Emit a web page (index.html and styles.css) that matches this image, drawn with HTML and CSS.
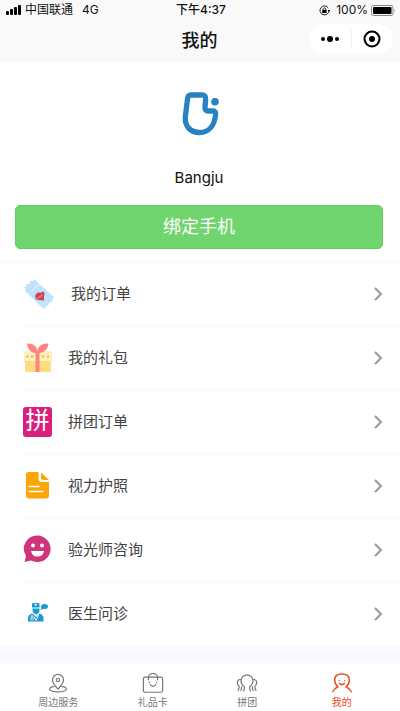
FILE: index.html
```html
<!DOCTYPE html>
<html lang="zh-CN">
<head>
<meta charset="utf-8">
<meta name="viewport" content="width=device-width, initial-scale=1">
<title>我的</title>
<link rel="stylesheet" href="styles.css">
</head>
<body>
<header class="top">
  <div class="status">
    <div class="carrier">
      <svg width="16" height="10" viewBox="0 0 16 10"><rect x="0" y="6" width="3" height="4" rx="1"/><rect x="4" y="4" width="3" height="6" rx="1"/><rect x="8" y="2" width="3" height="8" rx="1"/><rect x="12" y="0" width="3" height="10" rx="1"/></svg>
      <span>中国联通</span><span class="network">4G</span>
    </div>
    <time class="clock">下午4:37</time>
    <div class="power">
      <svg width="11" height="11" viewBox="0 0 11 11"><path d="M9.3 3A4.5 4.5 0 1 0 10 5.5" fill="none" stroke="#222"/><path d="M8.6 5h2.6L9.9 7z"/><rect x="3.2" y="4.8" width="4.4" height="3.2"/><path d="M4.2 5V4a1.2 1.2 0 0 1 2.4 0v1" fill="none" stroke="#222" stroke-width=".8"/></svg>
      <span>100%</span>
      <svg width="25" height="11" viewBox="0 0 25 11"><rect x=".5" y=".5" width="21.5" height="10" rx="2" fill="none" stroke="#888"/><rect x="2" y="2" width="18.5" height="7" rx="1"/><path d="M23 4q1.5 1.5 0 3z" fill="#888"/></svg>
    </div>
  </div>
  <div class="nav">
    <h1 class="title">我的</h1>
    <div class="capsule">
      <button type="button" class="capsule-btn" aria-label="更多"><svg width="20" height="18" viewBox="0 0 20 18"><circle cx="3" cy="9" r="2"/><circle cx="10" cy="9" r="3"/><circle cx="17" cy="9" r="2"/></svg></button>
      <button type="button" class="capsule-btn" aria-label="关闭"><svg width="18" height="18" viewBox="0 0 18 18"><circle cx="9" cy="9" r="7.5" fill="none" stroke="#000" stroke-width="2"/><circle cx="9" cy="9" r="3"/></svg></button>
    </div>
  </div>
</header>

<main class="content">
  <section class="profile">
    <svg class="logo" width="40" height="46" viewBox="0 0 40 46"><path d="M12 4H23Q27 4 26.600 8L26 16.500Q26 20 29.500 20H34Q37 20 36.600 23.500C35.500 35 29.500 41.500 20.500 41.500C11 41.500 5.800 35 6.300 26L8.500 8Q9 4 12 4Z" fill="none" stroke="#2781c2" stroke-width="5.300" stroke-linejoin="round"/><circle cx="36" cy="10.700" r="3.800" fill="#2781c2"/></svg>
    <p class="name">Bangju</p>
    <button type="button" class="bind">绑定手机</button>
  </section>

  <nav class="menu">
    <a class="item" href="#orders">
      <svg class="item-icon wide" viewBox="0 0 32 32"><path d="M1 9L3 8.500 4 6 6.500 5.500 7.500 3 10 3 12 1 14 3.500 15 5 31 19 29.500 21 29 23.500 26.500 24.500 25.500 27 23 28 21 31 19 29.500 2 13 2.500 11Z" fill="#bfe3fb"/><path d="M7.500 14L16 6" stroke="#e9f6ff" stroke-width="1"/><path d="M12.500 20C11.500 16 15 13.500 17.500 15C20.500 12 22.500 15 21 18V22.500L15.500 22Q13 22 12.500 20Z" fill="#cb4458"/><path d="M14.500 20.500L19.500 16.500" stroke="#ef9aa6" stroke-width="1.500" stroke-dasharray="1 .5"/></svg>
      <span class="label">我的订单</span><svg class="chevron" viewBox="0 0 10 16"><path d="M2 2l6 6-6 6"/></svg>
    </a>
    <a class="item" href="#gifts">
      <svg class="item-icon" viewBox="0 0 29 30"><rect x="1" y="8" width="28" height="11" rx="1" fill="#fff0b5"/><path d="M2 18h26v10q0 1-1 1H3q-1 0-1-1z" fill="#fedd80"/><path d="M12.500 29V10C8 10 4.500 6 4 .5C10 0 14 3 14.500 8C15 3 19 0 25.500 .5C25 6 21 10 16.500 10V29Z" fill="#fd8484"/><g fill="#f78383"><circle cx="4.500" cy="13.500" r="1"/><circle cx="9" cy="13.500" r="1"/><circle cx="20" cy="13.500" r="1"/><circle cx="25" cy="13.500" r="1"/></g></svg>
      <span class="label">我的礼包</span><svg class="chevron" viewBox="0 0 10 16"><path d="M2 2l6 6-6 6"/></svg>
    </a>
    <a class="item" href="#group-orders">
      <span class="item-icon group" aria-hidden="true">拼</span>
      <span class="label">拼团订单</span><svg class="chevron" viewBox="0 0 10 16"><path d="M2 2l6 6-6 6"/></svg>
    </a>
    <a class="item" href="#vision">
      <svg class="item-icon" viewBox="0 0 29 30"><path d="M5.500 1H15.500V7.500Q15.500 11 19 11H26V24.500Q26 27.500 23 27.500H6Q3 27.500 3 24.500V3.500Q3 1 5.500 1Z" fill="#fca505"/><path d="M18 1.500L26 9H20Q18 9 18 7Z" fill="#fca505"/><path d="M6 15.500h10M6 20.500h14" stroke="#fff" stroke-width="1.500" stroke-linecap="round"/></svg>
      <span class="label">视力护照</span><svg class="chevron" viewBox="0 0 10 16"><path d="M2 2l6 6-6 6"/></svg>
    </a>
    <a class="item" href="#optometrist">
      <svg class="item-icon" viewBox="0 0 29 30"><path d="M14.500 .5a13.300 13.300 0 1 1-6.500 25L1.500 27 3 21A13.300 13.300 0 0 1 14.500 .5Z" fill="#cf347d"/><circle cx="10" cy="10.500" r="2" fill="#fff"/><circle cx="19" cy="10.500" r="2" fill="#fff"/><path d="M8 16h13Q20 21.500 14.500 21.500T8 16Z" fill="#fff"/></svg>
      <span class="label">验光师咨询</span><svg class="chevron" viewBox="0 0 10 16"><path d="M2 2l6 6-6 6"/></svg>
    </a>
    <a class="item" href="#doctor">
      <svg class="item-icon" viewBox="0 0 29 30"><g fill="#1d98d4"><path d="M9 4.500Q13 3 16.500 4.500V8.500H9Z"/><path d="M9.500 9.500h7V11Q16.500 14.500 13 15.500Q9.500 14.500 9.500 11Z"/><path d="M5 22.500V19Q5 15.500 9.500 14.500L13 18 16.500 14.500Q20.500 15.500 20.500 19V22.500Z"/><ellipse cx="21.500" cy="7.500" rx="3.500" ry="2.500"/><path d="M19 7.500l-1.500 3.500 4-1.500z"/></g><path d="M12.700 4.500v2.500M11.500 5.700h2.500" fill="none" stroke="#fff" stroke-width=".8"/><path d="M9 16v2.500M15.500 16l-2.500 5.500-2-4" fill="none" stroke="#fff"/><circle cx="9" cy="19.500" r="1.400" fill="none" stroke="#fff" stroke-width=".8"/></svg>
      <span class="label">医生问诊</span><svg class="chevron" viewBox="0 0 10 16"><path d="M2 2l6 6-6 6"/></svg>
    </a>
  </nav>
</main>

<nav class="tabs">
  <a class="tab" href="#nearby"><svg viewBox="0 0 24 24"><path d="M12 17.500Q6 11 6 7.500a6 6 0 0 1 12 0Q18 11 12 17.500Z"/><circle cx="12" cy="7.500" r="1.800"/><path d="M8 14.500C4 15 2.500 16.500 3 18C5 21.500 19 21.500 21 18C21.500 16.500 20 15 16 14.500"/></svg>周边服务</a>
  <a class="tab" href="#cards"><svg viewBox="0 0 24 24"><rect x="1.500" y="4.500" width="21" height="16.500" rx="2"/><path d="M7 8V5a5 4.500 0 0 1 10 0V8M8.500 12q3.500 5 7 0M8 9.500v1.500M16 9.500v1.500"/></svg>礼品卡</a>
  <a class="tab" href="#group"><svg viewBox="0 0 24 24"><path d="M8 20q1.500-2 1-5Q5.500 12.500 5.500 8.500a6.500 6.500 0 0 1 13 0q0 4-3.500 6.500-.5 3 1 5M5 7Q1 7.500 1.500 11 1.500 13 3.500 14.500 3.500 17 2 19.500M6 14.500q.5 2.500-1 5M19 7q4 .5 3.500 4 0 2-2 3.500 0 2.500 1.500 5M18 14.500q-.5 2.500 1 5"/></svg>拼团</a>
  <a class="tab active" href="#me" aria-current="page"><svg viewBox="0 0 24 24"><path d="M1.500 21Q3.500 17 7.500 15 4 12 4 7.500Q4 1 12 1t8 6.500q0 4.500-3.500 7.500 4 2 6 6M9 11q3 3.500 6 0M9 8v1M15 8v1"/></svg>我的</a>
</nav>
</body>
</html>
```
FILE: styles.css
```css
* {
  box-sizing: border-box;
}

body {
  margin: 0;
  min-height: 100vh;
  display: flex;
  flex-direction: column;
  background: #f9f8fe;
  color: #111;
  font-family: "Liberation Sans", "Noto Sans CJK SC", sans-serif;
}

button {
  border: 0;
  padding: 0;
  background: none;
  font: inherit;
}

a {
  color: inherit;
  text-decoration: none;
}

.top {
  height: 62px;
  background: #f9f9f9;
}

.status {
  display: grid;
  grid-template-columns: 1fr auto 1fr;
  align-items: center;
  height: 20px;
  padding: 0 4px 0 6px;
  font-family: Inter, "Noto Sans CJK SC", sans-serif;
  font-size: 12px;
  line-height: 20px;
}

.carrier,
.power {
  display: flex;
  align-items: center;
  gap: 3px;
}

.power {
  justify-content: flex-end;
}

.power span {
  margin-left: 3px;
}

.network {
  margin-left: 6px;
}

.clock {
  font-weight: 500;
}

.nav {
  display: grid;
  grid-template-columns: 1fr auto 1fr;
  align-items: center;
  height: 38px;
  padding-right: 7px;
}

.title {
  grid-column: 2;
  margin: 0;
  padding: 3px 0 0 6px;
  font-size: 18px;
  font-weight: 500;
  line-height: 28px;
}

.capsule {
  justify-self: end;
  display: flex;
  width: 84px;
  height: 30px;
  border-radius: 15px;
  background: #fff;
}

.capsule-btn {
  flex: 1;
  display: flex;
  align-items: center;
  justify-content: center;
}

.capsule-btn + .capsule-btn {
  position: relative;
}

.capsule-btn + .capsule-btn::before {
  content: "";
  position: absolute;
  left: 0;
  top: 6px;
  bottom: 6px;
  border-left: 1px solid #eee;
}

.content {
  background: #fff;
}

.profile {
  display: flex;
  flex-direction: column;
  align-items: center;
  padding: 29px 17px 12px 15px;
  border-bottom: 1px solid #f7f7f7;
}

.name {
  margin: 30px 0 16px;
  font-family: Inter, sans-serif;
  font-size: 15px;
  line-height: 22px;
}

.bind {
  width: 100%;
  height: 44px;
  border: 1px solid #68ca64;
  border-radius: 5px;
  background: #70d56e;
  color: #fff;
  font-size: 18px;
  line-height: 40px;
}

.item {
  display: flex;
  align-items: center;
  height: 64px;
  margin-left: 23px;
  padding-right: 17px;
  border-bottom: 1px solid #f7f7f7;
}

.item:last-child {
  border-bottom: 0;
}

.item-icon {
  flex: none;
  width: 29px;
  height: 30px;
  margin-right: 16px;
}

.item-icon.wide {
  width: 32px;
  height: 32px;
}

.group {
  border-radius: 3px;
  background: #d81f7c;
  color: #fff;
  font-size: 24px;
  line-height: 28px;
  text-align: center;
}

.label {
  flex: 1;
  color: #444;
  font-size: 15px;
  line-height: 24px;
}

.chevron {
  width: 10px;
  height: 16px;
  fill: none;
  stroke: #999;
  stroke-width: 2;
}

.tabs {
  display: flex;
  height: 47px;
  margin-top: auto;
  padding: 0 11px;
  background: #fff;
}

.tab {
  flex: 1;
  display: flex;
  flex-direction: column;
  align-items: center;
  padding-top: 9px;
  color: #777;
  font-size: 10px;
  line-height: 16px;
}

.tab svg {
  width: 24px;
  height: 24px;
  fill: none;
  stroke: currentColor;
  stroke-width: 1.3;
}

.tab.active {
  color: #f04a1a;
}

.active svg {
  stroke-width: 1.6;
}
```
